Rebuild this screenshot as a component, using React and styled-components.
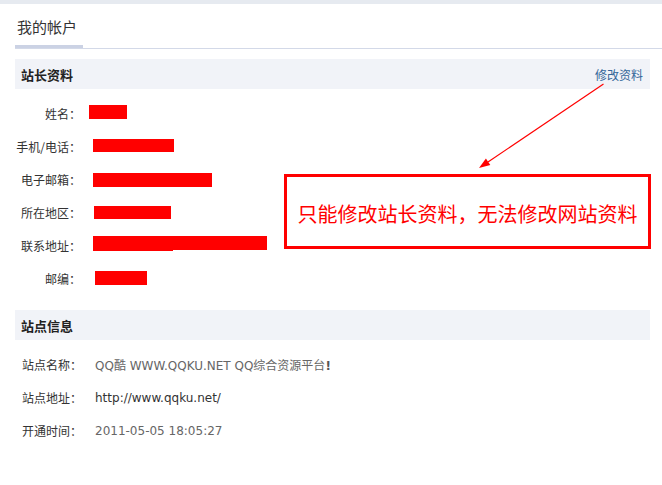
import React from "react";
import styled, { createGlobalStyle } from "styled-components";

const GlobalStyle = createGlobalStyle`
  html, body { margin: 0; padding: 0; background: #fff; }
  body { font-family: "Noto Sans CJK SC", "Noto Sans", sans-serif; color: #333; }
  * { box-sizing: border-box; }
`;

const Page = styled.div`
  position: relative;
  width: 662px;
  min-height: 485px;
  background: #fff;
`;

const TopBand = styled.div`
  height: 4px;
  background: #e6eaf0;
`;

const TitleBar = styled.div`
  display: flex;
  margin-left: 15px;
  border-bottom: 1px solid #d3d9e8;
`;

const Tab = styled.div`
  padding: 12px 6px 7px 2px;
  font-size: 15px;
  line-height: 22px;
  color: #333;
  border-bottom: 3px solid #cbd2e4;
`;

const Section = styled.section`
  margin: ${(p) => p.$top}px 12px 0 15px;
`;

const SectionHeader = styled.div`
  height: 30px;
  display: flex;
  align-items: center;
  justify-content: space-between;
  padding: 0 7px 0 6px;
  background: #f1f3f8;
`;

const HeaderTitle = styled.h3`
  margin: 0;
  font-size: 13px;
  font-weight: bold;
  color: #222;
`;

const EditLink = styled.a`
  font-size: 12px;
  color: #336699;
  text-decoration: none;
`;

const List = styled.div`
  padding-top: 8px;
`;

const FormRow = styled.div`
  display: grid;
  grid-template-columns: 66px 1fr;
  column-gap: 8px;
  height: 33px;
  align-items: center;
`;

const FieldLabel = styled.div`
  font-size: 12px;
  text-align: right;
  color: #333;
  white-space: nowrap;
`;

const Redaction = styled.span`
  position: relative;
  display: block;
  align-self: start;
  width: ${(p) => p.$w}px;
  height: ${(p) => p.$h}px;
  margin-left: ${(p) => p.$x}px;
  margin-top: ${(p) => p.$t}px;
  background: #ff0000;
  &::after {
    content: "";
    display: ${(p) => (p.$tail ? "block" : "none")};
    position: absolute;
    left: 0;
    top: 1px;
    width: ${(p) => p.$tail || 0}px;
    height: ${(p) => p.$h}px;
    background: #ff0000;
  }
`;

const SiteRow = styled.div`
  display: grid;
  grid-template-columns: 80px 1fr;
  height: 33px;
  align-items: center;
`;

const SiteLabel = styled.div`
  padding-left: 7px;
  font-size: 12px;
  color: #333;
  white-space: nowrap;
`;

const SiteValue = styled.div`
  font-family: "DejaVu Sans", "Noto Sans CJK SC", sans-serif;
  font-size: 12px;
  color: ${(p) => (p.$strong ? "#333" : "#666")};
  white-space: nowrap;
`;

const Bang = styled.span`
  font-weight: bold;
  color: #555;
`;

const Callout = styled.div`
  position: absolute;
  left: 284px;
  top: 174px;
  width: 367px;
  height: 75px;
  border: 3px solid #ff0000;
  display: flex;
  align-items: center;
  justify-content: center;
  padding-top: 3px;
  font-size: 20px;
  color: #ff0000;
  white-space: nowrap;
`;

const ArrowSvg = styled.svg`
  position: absolute;
  left: 476px;
  top: 80px;
  pointer-events: none;
`;

const fields = [
  { label: "姓名：", x: 0, t: 8, w: 38, h: 14 },
  { label: "手机/电话：", x: 4, t: 9, w: 81, h: 13 },
  { label: "电子邮箱：", x: 4, t: 10, w: 119, h: 14 },
  { label: "所在地区：", x: 5, t: 10, w: 77, h: 13 },
  { label: "联系地址：", x: 4, t: 7, w: 174, h: 14, tail: 80 },
  { label: "邮编：", x: 6, t: 9, w: 52, h: 14 },
];

export default function App() {
  return (
    <Page>
      <GlobalStyle />
      <TopBand />
      <TitleBar>
        <Tab>我的帐户</Tab>
      </TitleBar>

      <Section $top={10}>
        <SectionHeader>
          <HeaderTitle>站长资料</HeaderTitle>
          <EditLink href="#">修改资料</EditLink>
        </SectionHeader>
        <List>
          {fields.map((f) => (
            <FormRow key={f.label}>
              <FieldLabel>{f.label}</FieldLabel>
              <Redaction $x={f.x} $t={f.t} $w={f.w} $h={f.h} $tail={f.tail} />
            </FormRow>
          ))}
        </List>
      </Section>

      <Section $top={15}>
        <SectionHeader>
          <HeaderTitle>站点信息</HeaderTitle>
        </SectionHeader>
        <List>
          <SiteRow>
            <SiteLabel>站点名称：</SiteLabel>
            <SiteValue>
              QQ酷 WWW.QQKU.NET QQ综合资源平台<Bang>!</Bang>
            </SiteValue>
          </SiteRow>
          <SiteRow>
            <SiteLabel>站点地址：</SiteLabel>
            <SiteValue $strong>http://www.qqku.net/</SiteValue>
          </SiteRow>
          <SiteRow>
            <SiteLabel>开通时间：</SiteLabel>
            <SiteValue>2011-05-05 18:05:27</SiteValue>
          </SiteRow>
        </List>
      </Section>

      <ArrowSvg width="132" height="92" viewBox="0 0 132 92">
        <line x1="127.5" y1="4" x2="12" y2="82" stroke="#ff0000" strokeWidth="1.2" />
        <polygon points="3,88 14.3,85.1 9.9,78.5" fill="#ff0000" />
      </ArrowSvg>
      <Callout>只能修改站长资料，无法修改网站资料</Callout>
    </Page>
  );
}
